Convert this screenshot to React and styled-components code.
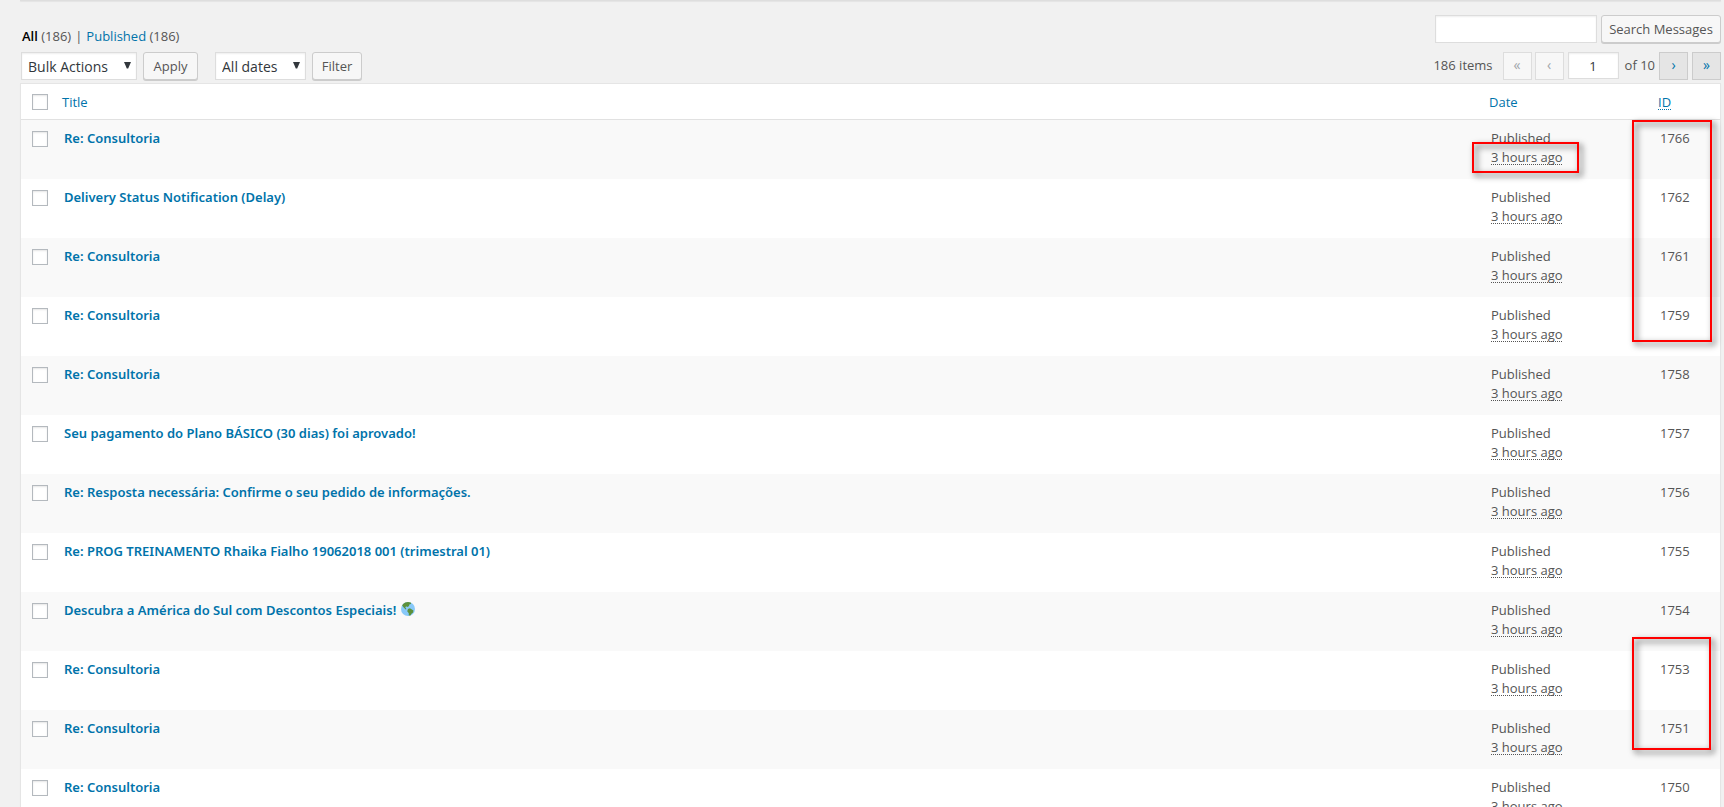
import React from 'react'
import styled, { createGlobalStyle } from 'styled-components'

const GlobalStyle = createGlobalStyle`
  * {
    box-sizing: border-box;
  }

  body {
    margin: 0;
    background: #f1f1f1;
    color: #555;
    font-family: "Open Sans", "Noto Sans", sans-serif;
    font-size: 13px;
    line-height: 19px;
  }

  button, input, select {
    margin: 0;
    font-family: inherit;
  }
`
const Page = styled.main`
  height: 100vh;
  overflow: hidden;
  padding: 0 3px 0 20px;
`
const PanelEdge = styled.div`
  height: 1px;
  background: #dedede;
  box-shadow: 0 1px 1px rgba(0, 0, 0, .06);
`
const Bar = styled.div`
  display: flex;
  justify-content: space-between;
`
const TopBar = styled(Bar)`
  height: 31px;
  margin-top: 14px;
  align-items: flex-start;
`
const NavBar = styled(Bar)`
  margin: 6px 0 3px;
  padding-left: 1px;
`
const Views = styled.ul`
  display: flex;
  align-self: flex-end;
  gap: 4px;
  margin: 0;
  padding: 0 0 0 2px;
  list-style: none;
`
const ViewLink = styled.a`
  color: ${ props => props.$current ? '#000' : '#0073aa' };
  font-weight: ${ props => props.$current ? 600 : 400 };
  text-decoration: none;
`
const Group = styled.div`
  display: flex;
  align-items: flex-start;
  gap: ${ props => props.$gap }px;
`
const Filters = styled(Group)`
  margin-right: ${ props => props.$last ? 0 : 17 }px;
`
const SearchForm = styled.form`
  display: flex;
  gap: 4px;
`
const field = `
  height: 28px;
  border: 1px solid #ddd;
  border-radius: 0;
  background: #fff;
  color: #32373c;
  box-shadow: inset 0 1px 2px rgba(0, 0, 0, .07);
`
const SearchInput = styled.input`
  ${ field }
  width: 162px;
  padding: 3px 5px;
  font-size: 14px;
`
const SelectWrap = styled.span`
  display: grid;
  align-items: center;
  width: ${ props => props.$width }px;

  select, svg {
    grid-area: 1 / 1;
  }

  svg {
    justify-self: end;
    margin: 0 6px 1px 0;
    pointer-events: none;
  }
`
const Select = styled.select`
  ${ field }
  appearance: none;
  width: 100%;
  padding: 1px 6px 0;
  font-size: 14px;
`
const Button = styled.button`
  height: 28px;
  padding: 0;
  width: ${ props => props.$width }px;
  border: 1px solid #ccc;
  border-radius: 3px;
  background: #f7f7f7;
  box-shadow: 0 1px 0 #ccc;
  color: #555;
  font-size: 13px;
  line-height: 26px;
  white-space: nowrap;
`
const Pagination = styled.nav`
  display: flex;
  align-items: flex-start;
`
const PagingText = styled.span`
  line-height: 27px;
  margin-right: ${ props => props.$gap }px;
`
const PageButton = styled.button`
  width: 29px;
  height: 28px;
  margin-right: 4px;
  padding: 0 0 3px;
  border: 1px solid ${ props => props.disabled ? '#ddd' : '#ccc' };
  background: ${ props => props.disabled ? '#f7f7f7' : '#e5e5e5' };
  color: ${ props => props.disabled ? '#a0a5aa' : '#0073aa' };
  font-size: 14px;
  line-height: 16px;

  &:disabled {
    margin-right: 3px;
  }

  &:last-child {
    margin-right: 0;
  }
`
const PageInput = styled.input`
  ${ field }
  width: 51px;
  height: 27px;
  margin: 0 6px 0 1px;
  padding: 0;
  font-size: 13px;
  text-align: center;
`
const Table = styled.table`
  width: 100%;
  table-layout: fixed;
  border: 1px solid #e5e5e5;
  border-spacing: 0;
  background: #fff;
  box-shadow: 0 1px 1px rgba(0, 0, 0, .04);

  tbody tr:nth-child(odd) {
    background: #f9f9f9;
  }
`
const HeadCell = styled.th`
  width: ${ props => props.$width ? `${ props.$width }px` : 'auto' };
  height: 36px;
  padding: 1px 8px 0;
  border-bottom: 1px solid #e1e1e1;
  font-size: 13px;
  font-weight: 400;
  text-align: left;

  a {
    color: #0073aa;
    text-decoration: none;
  }
`
const Cell = styled.td`
  position: relative;
  height: 59px;
  padding: 9px 10px 0;
  vertical-align: top;
`
const CheckHeadCell = styled(HeadCell)`
  padding: 1px 0 0 11px;
`
const CheckCell = styled(Cell)`
  padding: 11px 0 0 11px;
`
const Checkbox = styled.input`
  appearance: none;
  display: block;
  width: 16px;
  height: 16px;
  border: 1px solid #b4b9be;
  background: #fff;
  box-shadow: inset 0 1px 2px rgba(0, 0, 0, .1);
`
const RowTitle = styled.a`
  color: #0073aa;
  font-family: "Noto Sans", "Open Sans", sans-serif;
  font-size: 13px;
  font-weight: 600;
  text-decoration: none;

  svg {
    margin-left: 1px;
    vertical-align: -1px;
  }
`
const Abbr = styled.abbr`
  text-decoration: underline dotted 1px;
  text-underline-offset: 2px;
  text-decoration-skip-ink: none;
`
// red frame laid over the cells it points out
const Marker = styled.span`
  position: absolute;
  z-index: 1;
  top: ${ props => props.$top }px;
  left: ${ props => props.$left }px;
  width: ${ props => props.$width }px;
  height: ${ props => props.$height }px;
  border: 2px solid #f00;
  filter: drop-shadow(3px 3px 3px rgba(0, 0, 0, .7));
  pointer-events: none;
`

const Arrow = () => (
  <svg width="7" height="7" viewBox="0 0 7 7" aria-hidden="true">
    <path d="M0 0h7L4.200 6.500H2.800z" fill="#32373c" />
  </svg>
)

const Globe = () => (
  <svg width="14" height="14" viewBox="0 0 36 36" role="img" aria-label="globe">
    <circle cx="18" cy="18" r="18" fill="#88c9f9" />
    <path fill="#5c913b" d="M5 6C9 2 13 0 18 0l7 1 1 4-4 1-2 5-4 2-3-2-2 3 3 4-2 1-5-5-4-5zM18 18l5-2 5 3 4 3-1 5-4 3-3 5-4 0 0-6-4-5z" />
  </svg>
)

const messages = [
  { id: 1766, title: 'Re: Consultoria', dateMark: true, idMark: { width: 80, height: 222, top: 0 } },
  { id: 1762, title: 'Delivery Status Notification (Delay)' },
  { id: 1761, title: 'Re: Consultoria' },
  { id: 1759, title: 'Re: Consultoria' },
  { id: 1758, title: 'Re: Consultoria' },
  { id: 1757, title: 'Seu pagamento do Plano BÁSICO (30 dias) foi aprovado!' },
  { id: 1756, title: 'Re: Resposta necessária: Confirme o seu pedido de informações.' },
  { id: 1755, title: 'Re: PROG TREINAMENTO Rhaika Fialho 19062018 001 (trimestral 01)' },
  { id: 1754, title: 'Descubra a América do Sul com Descontos Especiais!', globe: true },
  { id: 1753, title: 'Re: Consultoria', idMark: { width: 79, height: 113, top: -14 } },
  { id: 1751, title: 'Re: Consultoria' },
  { id: 1750, title: 'Re: Consultoria' },
]

const MessageRow = ({ message }) => (
  <tr>
    <CheckCell>
      <Checkbox type="checkbox" aria-label={ `Select ${ message.title }` } />
    </CheckCell>
    <Cell>
      <RowTitle href="#edit">
        { message.title } { message.globe && <Globe /> }
      </RowTitle>
    </Cell>
    <Cell>
      Published<br />
      <Abbr>3 hours ago</Abbr>
      { message.dateMark && <Marker $top={ 22 } $left={ -9 } $width={ 107 } $height={ 31 } /> }
    </Cell>
    <Cell>
      { message.id }
      { message.idMark && (
        <Marker
          $top={ message.idMark.top }
          $left={ -18 }
          $width={ message.idMark.width }
          $height={ message.idMark.height }
        />
      ) }
    </Cell>
  </tr>
)

const App = () => (
  <>
    <GlobalStyle />
    <Page>
      <PanelEdge />
      <TopBar>
        <Views>
          <li><ViewLink href="#all" $current>All</ViewLink> (186)</li>
          <li>|</li>
          <li><ViewLink href="#published">Published</ViewLink> (186)</li>
        </Views>
        <SearchForm>
          <SearchInput type="search" aria-label="Search Messages" />
          <Button type="button" $width={ 120 }>Search Messages</Button>
        </SearchForm>
      </TopBar>
      <NavBar>
        <Group $gap={ 0 }>
          <Filters $gap={ 6 }>
            <SelectWrap $width={ 116 }>
              <Select aria-label="Bulk action">
                <option>Bulk Actions</option>
              </Select>
              <Arrow />
            </SelectWrap>
            <Button type="button" $width={ 55 }>Apply</Button>
          </Filters>
          <Filters $gap={ 6 } $last>
            <SelectWrap $width={ 91 }>
              <Select aria-label="Filter by date">
                <option>All dates</option>
              </Select>
              <Arrow />
            </SelectWrap>
            <Button type="button" $width={ 50 }>Filter</Button>
          </Filters>
        </Group>
        <Pagination>
          <PagingText $gap={ 10 }>186 items</PagingText>
          <PageButton disabled aria-label="First page">«</PageButton>
          <PageButton disabled aria-label="Previous page">‹</PageButton>
          <PageInput type="text" defaultValue="1" aria-label="Current page" />
          <PagingText $gap={ 4 }>of 10</PagingText>
          <PageButton aria-label="Next page">›</PageButton>
          <PageButton aria-label="Last page">»</PageButton>
        </Pagination>
      </NavBar>
      <Table>
        <thead>
          <tr>
            <CheckHeadCell $width={ 33 }>
              <Checkbox type="checkbox" aria-label="Select all" />
            </CheckHeadCell>
            <HeadCell><a href="#title">Title</a></HeadCell>
            <HeadCell $width={ 169 }><a href="#date">Date</a></HeadCell>
            <HeadCell $width={ 70 }><a href="#id"><Abbr>ID</Abbr></a></HeadCell>
          </tr>
        </thead>
        <tbody>
          { messages.map(message => <MessageRow key={ message.id } message={ message } />) }
        </tbody>
      </Table>
    </Page>
  </>
)

export default App
